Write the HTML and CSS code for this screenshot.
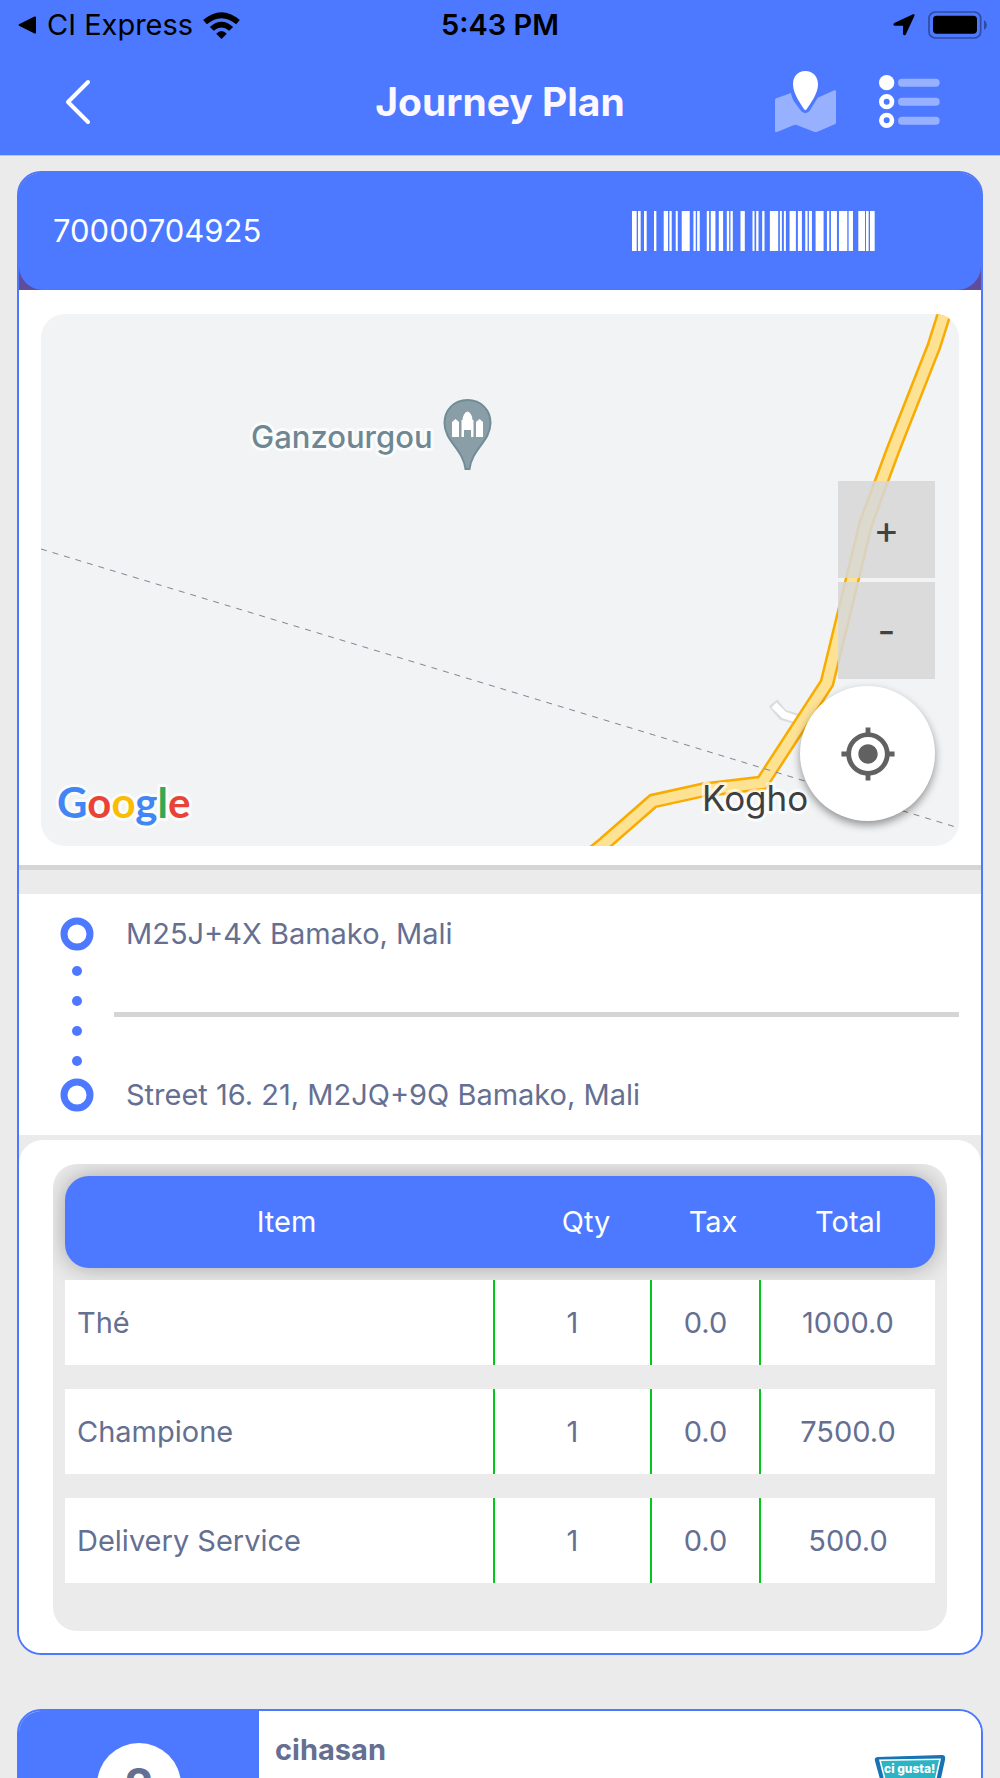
FILE: index.html
```html
<!DOCTYPE html>
<html lang="en">
<head>
  <meta charset="UTF-8">
  <meta name="viewport" content="width=device-width, initial-scale=1.0">
  <title>Journey Plan</title>
  <link rel="stylesheet" href="styles.css">
</head>
<body>
  <header class="top">
    <div class="status-bar">
      <div class="status-left">
        <svg width="19" height="18" viewBox="0 0 19 18"><path d="M1 8.200 16.500.5Q18 0 18 1.500V16.500Q18 18 16.500 17.500L1 9.800Q0 9 1 8.200Z"/></svg>
        <span>CI Express</span>
        <svg width="37" height="27" viewBox="605 30 110 81">
          <path d="M605 54Q660 7 715 54L704 67Q660 30 616 67Z"/>
          <path d="M625 75Q660 43 695 75L683 86Q660 67 637 86Z"/>
          <path d="M644 95Q660 79 676 95L660 111Z"/>
        </svg>
      </div>
      <span class="clock">5:43 PM</span>
      <div class="status-right">
        <svg width="22" height="22" viewBox="1180 43 66 66"><path d="M1184 70 1240 44Q1247 42 1244 49L1218 105Q1214 109 1210 104V78H1184Q1178 75 1184 70Z"/></svg>
        <svg width="59" height="28" viewBox="1284 31 177 84">
          <rect x="1287" y="34" width="155" height="78" rx="19" fill="none" stroke="#2f4ba3" stroke-width="5"/>
          <rect x="1299" y="45" width="132" height="54" rx="11"/>
          <path d="M1452 58Q1461 64 1461 73T1452 88Z" fill="#2f4ba3"/>
        </svg>
      </div>
    </div>
    <div class="nav-bar">
      <button class="icon-btn back" aria-label="Back">
        <svg width="26" height="46" viewBox="0 0 26 46"><path d="M23 3 3 23 23 43" fill="none" stroke="#fff" stroke-width="4" stroke-linecap="round" stroke-linejoin="round"/></svg>
      </button>
      <h1 class="title">Journey Plan</h1>
      <div class="nav-actions">
        <button class="icon-btn" aria-label="Map">
          <svg width="61" height="61" viewBox="825 213 183 183">
            <path fill="#98b1ff" d="M825 300Q825 296 829 295L873 279Q875 293 881 303L904 334Q916 345 928 334L953 293 1003 271Q1008 269 1008 274V368Q1008 371 1004 373L952 395Q947 397 942 395L890 375Q886 373 882 375L831 396Q825 397 825 392Z"/>
            <path fill="#fff" d="M916 213C893 213 879 230 879 253C879 282 903 312 912 328Q916 333 920 328C930 312 954 282 954 253C954 230 939 213 916 213Z"/>
          </svg>
        </button>
        <button class="icon-btn" aria-label="List">
          <svg width="61" height="53" viewBox="1137 226 183 159">
            <g fill="#98b1ff">
              <rect x="1194" y="237" width="125" height="24" rx="12"/>
              <rect x="1194" y="294" width="125" height="24" rx="12"/>
              <rect x="1194" y="351" width="125" height="24" rx="12"/>
            </g>
            <circle cx="1160" cy="249" r="23" fill="#fff"/>
            <circle cx="1160" cy="306" r="16" fill="none" stroke="#fff" stroke-width="14"/>
            <circle cx="1160" cy="362" r="16" fill="none" stroke="#fff" stroke-width="14"/>
          </svg>
        </button>
      </div>
    </div>
  </header>

  <main class="content">
    <article class="card">
      <div class="card-head-wrap">
        <div class="card-head">
          <span>70000704925</span>
          <svg width="243" height="40" viewBox="97 0 728 120" preserveAspectRatio="none" fill="#fff" role="img" aria-label="Barcode">
            <path d="M97 0h14v120h-14zM115 0h8v120h-8zM133 0h8v120h-8zM163 0h7v120h-7zM192 0h13v120h-13zM209 0h7v120h-7zM228 0h6v120h-6zM246 0h24v120h-24zM281 0h7v120h-7zM292 0h8v120h-8zM321 0h7v120h-7zM333 0h14v120h-14zM357 0h13v120h-13zM381 0h7v120h-7zM392 0h7v120h-7zM422 0h13v120h-13zM458 0h6v120h-6zM469 0h7v120h-7zM487 0h7v120h-7zM510 0h25v120h-25zM540 0h6v120h-6zM552 0h6v120h-6zM569 0h19v120h-19zM594 0h12v120h-12zM616 0h7v120h-7zM627 0h9v120h-9zM647 0h24v120h-24zM681 0h7v120h-7zM693 0h18v120h-18zM717 0h25v120h-25zM746 0h13v120h-13zM775 0h20v120h-20zM798 0h8v120h-8zM810 0h14v120h-14z"/>
          </svg>
        </div>
      </div>

      <section class="map-section">
        <div class="map">
          <svg class="map-canvas" viewBox="41 314 918 532" role="img" aria-label="Map of Kogho">
            <rect x="41" y="314" width="918" height="532" fill="#f1f3f5"/>
            <path d="M773 703 783 715 804 721" fill="none" stroke="#dadce0" stroke-width="11"/>
            <path d="M774 705 784 715 806 722" fill="none" stroke="#fff" stroke-width="7"/>
            <path d="M947 305 934 346 893 450 866 523 827 683 762 783 703 790 653 801 605 843 594 852" fill="none" stroke="#f9ab00" stroke-width="15"/>
            <path d="M947 305 934 346 893 450 866 523 827 683 762 783 703 790 653 801 605 843 594 852" fill="none" stroke="#fde293" stroke-width="10"/>
            <path d="M41 549 562 707 959 828" fill="none" stroke="#80868b" stroke-width="1" stroke-dasharray="6 6"/>
            <text class="place" x="251" y="448">Ganzourgou</text>
            <path d="M467.500 400C454 400 444.500 410 444.500 423C444.500 441 463 449 465.500 469H469.500C472 449 490.500 441 490.500 423C490.500 410 481 400 467.500 400Z" fill="#8a9ea8" stroke="#728c97" stroke-width="2"/>
            <path d="M452 437V422L455.500 419 459 422V437ZM461.500 437V420H462.500Q463 413 467.500 411.500Q472 413 472.500 420H473.500V437H471V430H464V437ZM476 437V422L479.500 419 483 422V437Z" fill="#fff"/>
            <text class="town" x="702" y="811">Kogho</text>
            <text class="google" x="57" y="818"><tspan fill="#4285f4">G</tspan><tspan fill="#ea4335">o</tspan><tspan fill="#fbbc04">o</tspan><tspan fill="#4285f4">g</tspan><tspan fill="#34a853">l</tspan><tspan fill="#ea4335">e</tspan></text>
          </svg>
          <div class="map-controls">
            <button class="zoom-btn" aria-label="Zoom in">+</button>
            <button class="zoom-btn" aria-label="Zoom out">-</button>
          </div>
          <button class="locate-btn" aria-label="My location">
            <svg width="58" height="58" viewBox="0 0 24 24" fill="#616161"><path d="M12 8c-2.210 0-4 1.790-4 4s1.790 4 4 4 4-1.790 4-4-1.790-4-4-4zm8.940 3c-.46-4.170-3.770-7.480-7.940-7.940V1h-2v2.060C6.830 3.520 3.520 6.830 3.060 11H1v2h2.060c.46 4.170 3.770 7.480 7.940 7.940V23h2v-2.060c4.170-.46 7.480-3.770 7.940-7.940H23v-2h-2.060zM12 19c-3.870 0-7-3.130-7-7s3.130-7 7-7 7 3.130 7 7-3.130 7-7 7z"/></svg>
          </button>
        </div>
      </section>

      <section class="route">
        <svg class="route-line" width="34" height="197" viewBox="0 0 34 197" fill="#4c79ff">
          <circle cx="17" cy="18" r="13" fill="none" stroke="#4c79ff" stroke-width="7"/>
          <circle cx="17" cy="55" r="5"/>
          <circle cx="17" cy="85" r="5"/>
          <circle cx="17" cy="115" r="5"/>
          <circle cx="17" cy="145" r="5"/>
          <circle cx="17" cy="179" r="13" fill="none" stroke="#4c79ff" stroke-width="7"/>
        </svg>
        <div class="route-stops">
          <p>M25J+4X Bamako, Mali</p>
          <hr>
          <p>Street 16. 21, M2JQ+9Q Bamako, Mali</p>
        </div>
      </section>

      <section class="order">
        <table class="items">
          <thead>
            <tr>
              <th>Item</th>
              <th>Qty</th>
              <th>Tax</th>
              <th>Total</th>
            </tr>
          </thead>
          <tbody>
            <tr>
              <td>Thé</td>
              <td>1</td>
              <td>0.0</td>
              <td>1000.0</td>
            </tr>
            <tr>
              <td>Champione</td>
              <td>1</td>
              <td>0.0</td>
              <td>7500.0</td>
            </tr>
            <tr>
              <td>Delivery Service</td>
              <td>1</td>
              <td>0.0</td>
              <td>500.0</td>
            </tr>
          </tbody>
        </table>
      </section>
    </article>

    <article class="card stop">
      <div class="stop-side"><span class="stop-number">2</span></div>
      <div class="stop-body">
        <h2>cihasan</h2>
        <svg class="brand" width="72" height="60" viewBox="0 0 72 60" role="img" aria-label="ci gusta!">
          <path d="M4 2 68 0Q72 0 71 5L62 46Q36 60 12 46L1 6Q0 2 4 2Z" fill="#1673b4"/>
          <path d="M5 4.500 67 3.500 58 44Q36 56 15 44Z" fill="#fff"/>
          <path d="M7 6 65 5 57 42Q36 53 16 42Z" fill="#2cb4c4"/>
          <text x="10" y="18">ci gusta!</text>
        </svg>
      </div>
    </article>
  </main>
</body>
</html>
```

FILE: styles.css
```css
* {
  box-sizing: border-box;
}

body {
  margin: 0;
  height: 100vh;
  display: flex;
  flex-direction: column;
  overflow: hidden;
  background: #ebebeb;
  color: #656f91;
  font-family: Inter, "Liberation Sans", sans-serif;
  font-size: 29px;
  line-height: 36px;
}

svg {
  display: block;
}

button {
  padding: 0;
  border: none;
  background: none;
  font: inherit;
  cursor: pointer;
}

/* header */
.top {
  flex: none;
  background: #4c79ff;
  border-bottom: 1px solid #c4c6cd;
}

.status-bar {
  display: grid;
  grid-template-columns: 1fr auto 1fr;
  align-items: center;
  height: 50px;
  padding: 0 13px;
  color: #000;
}

.status-left,
.status-right {
  display: flex;
  align-items: center;
  gap: 10px;
}

.status-left {
  padding-left: 5px;
}

.status-right {
  justify-content: flex-end;
  gap: 13px;
}

.clock {
  font-weight: 600;
}

.nav-bar {
  display: grid;
  grid-template-columns: 1fr auto 1fr;
  align-items: center;
  height: 105px;
  padding: 0 60px 2px;
}

.icon-btn {
  display: block;
}

.back {
  justify-self: start;
  padding-left: 5px;
}

.title {
  margin: 0;
  color: #fdf7ff;
  font-size: 39px;
  line-height: 48px;
  font-weight: 700;
}

.nav-actions {
  display: flex;
  align-items: center;
  justify-content: flex-end;
  gap: 43px;
}

/* cards */
.content {
  flex: 1;
  min-height: 0;
  padding: 15px 17px;
  overflow: hidden;
}

.card {
  margin-bottom: 54px;
  border: 2px solid #4c79ff;
  border-radius: 24px;
  background: #ebebeb;
  overflow: hidden;
}

.card-head-wrap {
  background: #5f4c9b;
}

.card-head {
  display: flex;
  align-items: center;
  justify-content: space-between;
  height: 117px;
  padding: 0 106px 2px 34px;
  border-radius: 0 0 24px 24px;
  background: #4c79ff;
  color: #fff;
  font-size: 31px;
}

/* map */
.map-section {
  padding: 24px 22px 19px;
  border-bottom: 5px solid #d5d5d5;
  background: #fff;
}

.map {
  position: relative;
  border-radius: 24px;
  overflow: hidden;
}

.map-canvas {
  width: 100%;
  height: auto;
}

.map-canvas text {
  paint-order: stroke;
  stroke: #fff;
  stroke-opacity: 0.7;
  stroke-width: 6px;
  stroke-linejoin: round;
}

.place {
  font-size: 31px;
  font-weight: 500;
  fill: #6e8792;
}

.town {
  font-size: 35px;
  fill: #3c4043;
}

.google {
  font-family: Lato, sans-serif;
  font-size: 42px;
  font-weight: 700;
}

.map-controls {
  position: absolute;
  top: 167px;
  right: 24px;
  display: grid;
  gap: 4px;
}

.zoom-btn {
  width: 97px;
  height: 97px;
  background: rgba(215, 215, 215, 0.87);
  color: #424242;
  font-size: 39px;
}

.locate-btn {
  position: absolute;
  right: 24px;
  bottom: 25px;
  display: grid;
  place-items: center;
  width: 135px;
  height: 135px;
  border-radius: 50%;
  background: #fff;
  box-shadow: 0 4px 8px rgba(0, 0, 0, 0.4);
}

/* route */
.route {
  display: flex;
  gap: 20px;
  margin-top: 24px;
  padding: 22px 22px 22px 41px;
  background: #fff;
}

.route-line {
  flex: none;
}

.route-stops {
  flex: 1;
  display: flex;
  flex-direction: column;
  justify-content: space-between;
}

.route-stops p {
  margin: 0;
  padding-left: 12px;
}

.route-stops hr {
  width: 100%;
  height: 5px;
  margin: 0;
  border: none;
  background: #d5d5d5;
}

/* order table */
.order {
  margin-top: 5px;
  padding: 24px 34px 22px;
  border-radius: 24px 24px 0 0;
  background: #fff;
}

.items {
  display: block;
  padding: 12px 12px 48px;
  border-radius: 24px;
  background: #ebebeb;
  overflow: hidden;
}

.items thead {
  display: block;
}

.items tr {
  display: grid;
  align-items: center;
}

.items thead tr {
  grid-template-columns: 443fr 156fr 98fr 173fr;
  height: 92px;
  border-radius: 24px;
  background: #4c79ff;
  box-shadow: 0 0 24px rgba(0, 0, 0, 0.3);
}

.items th {
  padding: 0;
  color: #fff;
  font-weight: 400;
  text-align: center;
}

.items tbody {
  position: relative;
  display: grid;
  gap: 24px;
  margin-top: 12px;
}

.items tbody tr {
  grid-template-columns: 430fr 157fr 109fr 174fr;
  height: 85px;
  background: #fff;
}

.items td {
  height: 85px;
  padding: 0;
  border-right: 2px solid #00c91c;
  line-height: 85px;
  text-align: center;
}

.items td:first-child {
  padding-left: 12px;
  text-align: left;
}

.items td:last-child {
  border-right: none;
}

/* next stop */
.stop {
  display: flex;
  height: 220px;
}

.stop-side {
  flex: 0 0 240px;
  padding-top: 32px;
  background: #4c79ff;
}

.stop-number {
  display: grid;
  place-items: center;
  width: 84px;
  height: 84px;
  margin: 0 auto;
  border-radius: 50%;
  background: #fff;
  font-size: 46px;
  font-weight: 700;
}

.stop-body {
  flex: 1;
  display: flex;
  justify-content: space-between;
  padding: 21px 35px 0 16px;
  background: #fff;
}

.stop-body h2 {
  margin: 0;
  font-size: 29px;
  font-weight: 700;
}

.brand {
  margin-top: 23px;
}

.brand text {
  fill: #fff;
  font-size: 12px;
  font-weight: 800;
}
```
